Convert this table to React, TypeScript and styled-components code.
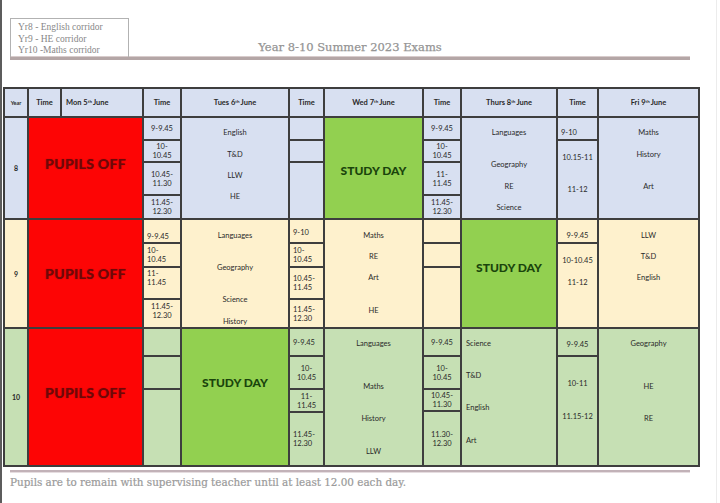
import React from 'react';
import styled, { createGlobalStyle } from 'styled-components';

type Align = 'left' | 'center';
interface Item { t: string; y?: number }
interface Slot { h?: number; items?: Item[]; align?: Align }
type Main =
  | { kind: 'content'; items: Item[]; align?: Align }
  | { kind: 'study'; shift: number };
interface Day { slots: Slot[]; main: Main }
interface YearRow { year: string; top: number; bg: string; offShift: number; days: Day[] }

const BLUE = '#d8e0f1';
const YELLOW = '#fef1cd';
const GREEN = '#c6e0b4';
const LINE = '#3e3e3e';

const GlobalStyle = createGlobalStyle`
  html, body { margin: 0; padding: 0; background: #ffffff; }
  body { font-family: Lato, "Liberation Sans", sans-serif; }
`;

const Page = styled.div`
  width: 717px;
  height: 503px;
  box-sizing: border-box;
  border-left: 2px solid #5c5c5c;
  border-right: 1px solid #ececec;
  padding: 18px 0 0 1px;
  display: flex;
  flex-direction: column;
  overflow: hidden;
  background: #ffffff;
`;

const TopBar = styled.div`
  margin-left: 7px;
  width: 680px;
  height: 39px;
  display: grid;
  grid-template-columns: 1fr auto 1fr;
  align-items: end;
  border-bottom: 3px solid #b4a6a6;
  box-shadow: 0 -1px 0 #d8cccc inset;
`;

const Legend = styled.div`
  width: 119px;
  height: 39px;
  box-sizing: border-box;
  border: 1px solid #b2b2b2;
  border-bottom: none;
  padding: 3px 0 0 7px;
  font-family: "Liberation Serif", serif;
  font-size: 9.5px;
  line-height: 11.5px;
  color: #878787;
  justify-self: start;
`;

const Title = styled.div`
  font-family: "DejaVu Serif", serif;
  font-size: 11.5px;
  color: #949494;
  padding-bottom: 3px;
  white-space: nowrap;
  -webkit-text-stroke: 0.25px #949494;
`;

const Table = styled.div`
  margin-top: 27px;
  width: 697px;
  height: 380px;
  box-sizing: border-box;
  padding: 2px;
  gap: 2px;
  background: ${LINE};
  display: grid;
  grid-template-columns: 22px 31px 80px 36px 106px 33px 97px 36px 94px 39px 99px;
  grid-template-rows: 27px 100px 107px 136px;
  color: #2a2a2a;
`;

const HeadCell = styled.div<{ $align?: Align }>`
  background: ${BLUE};
  display: flex;
  align-items: center;
  justify-content: ${(p) => (p.$align === 'left' ? 'flex-start' : 'center')};
  padding-left: ${(p) => (p.$align === 'left' ? '4px' : '0')};
  font-size: 7.5px;
  font-weight: 700;
  white-space: nowrap;
`;

const YearHead = styled(HeadCell)`
  font-size: 5.5px;
`;

const Sup = styled.sup`
  font-size: 4.5px;
  vertical-align: top;
  line-height: 1;
  margin-right: 1px;
`;

const YearCell = styled.div<{ $bg: string }>`
  background: ${(p) => p.$bg};
  display: flex;
  align-items: center;
  justify-content: center;
  font-size: 7px;
  font-weight: 700;
`;

const shiftPad = (s: number) =>
  s < 0 ? `padding-bottom: ${-2 * s}px;` : `padding-top: ${2 * s}px;`;

const OffCell = styled.div<{ $shift: number }>`
  grid-column: span 2;
  background: #fd0505;
  display: flex;
  align-items: center;
  justify-content: center;
  box-sizing: border-box;
  ${(p) => shiftPad(p.$shift)}
  font-size: 14px;
  font-weight: 900;
  color: #6f0808;
  letter-spacing: 0.3px;
  text-shadow: 0 0 1px rgba(110, 8, 8, 0.6);
`;

const StudyCell = styled.div<{ $shift: number }>`
  background: #92d050;
  display: flex;
  align-items: center;
  justify-content: center;
  box-sizing: border-box;
  ${(p) => shiftPad(p.$shift)}
  font-size: 12px;
  font-weight: 900;
  color: #1a440c;
`;

const TimeCol = styled.div`
  display: flex;
  flex-direction: column;
  gap: 2px;
  min-height: 0;
`;

const SlotBox = styled.div<{ $bg: string; $h?: number; $align: Align; $stacked: boolean }>`
  background: ${(p) => p.$bg};
  ${(p) => (p.$h !== undefined ? `height: ${p.$h}px; flex: none;` : 'flex: 1;')}
  display: flex;
  flex-direction: column;
  justify-content: ${(p) => (p.$stacked ? 'flex-start' : 'center')};
  align-items: ${(p) => (p.$align === 'left' ? 'flex-start' : 'center')};
  padding-left: ${(p) => (p.$align === 'left' ? '3px' : '0')};
  overflow: hidden;
  font-size: 7.5px;
  line-height: 9px;
  text-align: ${(p) => (p.$align === 'left' ? 'left' : 'center')};
`;

const ContentCell = styled.div<{ $bg: string; $align: Align }>`
  background: ${(p) => p.$bg};
  display: flex;
  flex-direction: column;
  align-items: ${(p) => (p.$align === 'left' ? 'flex-start' : 'center')};
  padding-left: ${(p) => (p.$align === 'left' ? '4px' : '0')};
  overflow: hidden;
  font-size: 7.5px;
  line-height: 10px;
`;

const Line = styled.div<{ $mt: number }>`
  margin-top: ${(p) => p.$mt}px;
  white-space: pre;
  flex: none;
`;

const FooterRule = styled.div`
  margin: 3px 0 0 7px;
  width: 680px;
  border-top: 2px solid #c2b2b8;
  box-shadow: 0 1px 0 #e6dde0;
`;

const FooterText = styled.div`
  margin: 4px 0 0 7px;
  font-family: "DejaVu Serif", serif;
  font-size: 10.4px;
  line-height: 12px;
  color: #9a9a9a;
  white-space: nowrap;
  -webkit-text-stroke: 0.2px #9a9a9a;
`;

const stackMargins = (items: Item[], top: number, lh: number) => {
  let cursor = top;
  return items.map((it) => {
    const h = it.t.split('\n').length * lh;
    const y0 = (it.y ?? top) - h / 2;
    const mt = Math.round(y0 - cursor);
    cursor = cursor + mt + h;
    return mt;
  });
};

const rows: YearRow[] = [
  {
    year: '8', top: 118, bg: BLUE, offShift: -5,
    days: [
      {
        slots: [
          { h: 21, items: [{ t: '9-9.45' }] },
          { h: 20, items: [{ t: '10-\n10.45' }] },
          { h: 31, items: [{ t: '10.45-\n11.30' }] },
          { items: [{ t: '11.45-\n12.30' }] },
        ],
        main: { kind: 'content', items: [{ t: 'English', y: 133 }, { t: 'T&D', y: 155 }, { t: 'LLW', y: 176 }, { t: 'HE', y: 197 }] },
      },
      { slots: [{ h: 21 }, { h: 20 }, {}], main: { kind: 'study', shift: 2 } },
      {
        slots: [
          { h: 21, items: [{ t: '9-9.45' }] },
          { h: 20, items: [{ t: '10-\n10.45' }] },
          { h: 31, items: [{ t: '11-\n11.45' }] },
          { items: [{ t: '11.45-\n12.30' }] },
        ],
        main: { kind: 'content', items: [{ t: 'Languages', y: 133 }, { t: 'Geography', y: 165 }, { t: 'RE', y: 187 }, { t: 'Science', y: 208 }] },
      },
      {
        slots: [
          { h: 21, align: 'left', items: [{ t: '9-10', y: 132 }] },
          { items: [{ t: '10.15-11', y: 157 }, { t: '11-12', y: 189 }] },
        ],
        main: { kind: 'content', items: [{ t: 'Maths', y: 133 }, { t: 'History', y: 155 }, { t: 'Art', y: 187 }] },
      },
    ],
  },
  {
    year: '9', top: 220, bg: YELLOW, offShift: 0,
    days: [
      {
        slots: [
          { h: 22, align: 'left', items: [{ t: '9-9.45', y: 236 }] },
          { h: 22, align: 'left', items: [{ t: '10-\n10.45' }] },
          { h: 30, align: 'left', items: [{ t: '11-\n11.45', y: 278 }] },
          { items: [{ t: '11.45-\n12.30', y: 311 }] },
        ],
        main: { kind: 'content', items: [{ t: 'Languages', y: 236 }, { t: 'Geography', y: 268 }, { t: 'Science', y: 300 }, { t: 'History', y: 322 }] },
      },
      {
        slots: [
          { h: 22, align: 'left', items: [{ t: '9-10', y: 232 }] },
          { h: 22, align: 'left', items: [{ t: '10-\n10.45' }] },
          { h: 30, align: 'left', items: [{ t: '10.45-\n11.45' }] },
          { align: 'left', items: [{ t: '11.45-\n12.30' }] },
        ],
        main: { kind: 'content', items: [{ t: 'Maths', y: 236 }, { t: 'RE', y: 257 }, { t: 'Art', y: 278 }, { t: 'HE', y: 311 }] },
      },
      { slots: [{ h: 22 }, { h: 22 }, {}], main: { kind: 'study', shift: -6 } },
      {
        slots: [
          { h: 22, items: [{ t: '9-9.45', y: 235 }] },
          { items: [{ t: '10-10.45', y: 260 }, { t: '11-12', y: 282 }] },
        ],
        main: { kind: 'content', items: [{ t: 'LLW', y: 236 }, { t: 'T&D', y: 257 }, { t: 'English', y: 278 }] },
      },
    ],
  },
  {
    year: '10', top: 329, bg: GREEN, offShift: -5,
    days: [
      { slots: [{ h: 26 }, { h: 31 }, {}], main: { kind: 'study', shift: -15 } },
      {
        slots: [
          { h: 26, align: 'left', items: [{ t: '9-9.45' }] },
          { h: 31, items: [{ t: '10-\n10.45' }] },
          { h: 21, items: [{ t: '11-\n11.45' }] },
          { align: 'left', items: [{ t: '11.45-\n12.30' }] },
        ],
        main: { kind: 'content', items: [{ t: 'Languages', y: 344 }, { t: 'Maths', y: 387 }, { t: 'History', y: 419 }, { t: 'LLW', y: 452 }] },
      },
      {
        slots: [
          { h: 26, items: [{ t: '9-9.45' }] },
          { h: 31, items: [{ t: '10-\n10.45' }] },
          { h: 20, items: [{ t: '10.45-\n11.30' }] },
          { items: [{ t: '11.30-\n12.30' }] },
        ],
        main: { kind: 'content', align: 'left', items: [{ t: 'Science', y: 344 }, { t: 'T&D', y: 376 }, { t: 'English', y: 408 }, { t: 'Art', y: 441 }] },
      },
      {
        slots: [
          { h: 26, items: [{ t: '9-9.45', y: 344 }] },
          { items: [{ t: '10-11', y: 383 }, { t: '11.15-12', y: 416 }] },
        ],
        main: { kind: 'content', items: [{ t: 'Geography', y: 344 }, { t: 'HE', y: 387 }, { t: 'RE', y: 419 }] },
      },
    ],
  },
];

const Stack: React.FC<{ items: Item[]; top: number; lh: number }> = ({ items, top, lh }) => {
  const stacked = items.some((i) => i.y !== undefined);
  const mts = stacked ? stackMargins(items, top, lh) : items.map(() => 0);
  return (
    <>
      {items.map((it, i) => (
        <Line key={i} $mt={mts[i]}>{it.t}</Line>
      ))}
    </>
  );
};

const TimeColumn: React.FC<{ slots: Slot[]; top: number; bg: string }> = ({ slots, top, bg }) => {
  let cursor = top;
  return (
    <TimeCol>
      {slots.map((s, i) => {
        const slotTop = cursor;
        cursor += (s.h ?? 0) + 2;
        const items = s.items ?? [];
        const stacked = items.some((it) => it.y !== undefined);
        return (
          <SlotBox key={i} $bg={bg} $h={s.h} $align={s.align ?? 'center'} $stacked={stacked}>
            <Stack items={items} top={slotTop} lh={9} />
          </SlotBox>
        );
      })}
    </TimeCol>
  );
};

const DayHead: React.FC<{ day: string; num: string; suf: string; align?: Align }> = ({ day, num, suf, align }) => (
  <HeadCell $align={align}>
    {day} {num}
    <Sup>{suf}</Sup> June
  </HeadCell>
);

export default function App() {
  return (
    <>
      <GlobalStyle />
      <Page>
        <TopBar>
          <Legend>
            <div>Yr8 - English corridor</div>
            <div>Yr9 - HE corridor</div>
            <div>Yr10 -Maths corridor</div>
          </Legend>
          <Title>Year 8-10 Summer 2023 Exams</Title>
          <div />
        </TopBar>

        <Table>
          <YearHead>Year</YearHead>
          <HeadCell>Time</HeadCell>
          <DayHead day="Mon" num="5" suf="th" align="left" />
          <HeadCell>Time</HeadCell>
          <DayHead day="Tues" num="6" suf="th" />
          <HeadCell>Time</HeadCell>
          <DayHead day="Wed" num="7" suf="th" />
          <HeadCell>Time</HeadCell>
          <DayHead day="Thurs" num="8" suf="th" />
          <HeadCell>Time</HeadCell>
          <DayHead day="Fri" num="9" suf="th" />

          {rows.map((r) => (
            <React.Fragment key={r.year}>
              <YearCell $bg={r.bg}>{r.year}</YearCell>
              <OffCell $shift={r.offShift}>PUPILS OFF</OffCell>
              {r.days.map((d, i) => (
                <React.Fragment key={i}>
                  <TimeColumn slots={d.slots} top={r.top} bg={r.bg} />
                  {d.main.kind === 'study' ? (
                    <StudyCell $shift={d.main.shift}>STUDY DAY</StudyCell>
                  ) : (
                    <ContentCell $bg={r.bg} $align={d.main.align ?? 'center'}>
                      <Stack items={d.main.items} top={r.top} lh={10} />
                    </ContentCell>
                  )}
                </React.Fragment>
              ))}
            </React.Fragment>
          ))}
        </Table>

        <FooterRule />
        <FooterText>Pupils are to remain with supervising teacher until at least 12.00 each day.</FooterText>
      </Page>
    </>
  );
}
